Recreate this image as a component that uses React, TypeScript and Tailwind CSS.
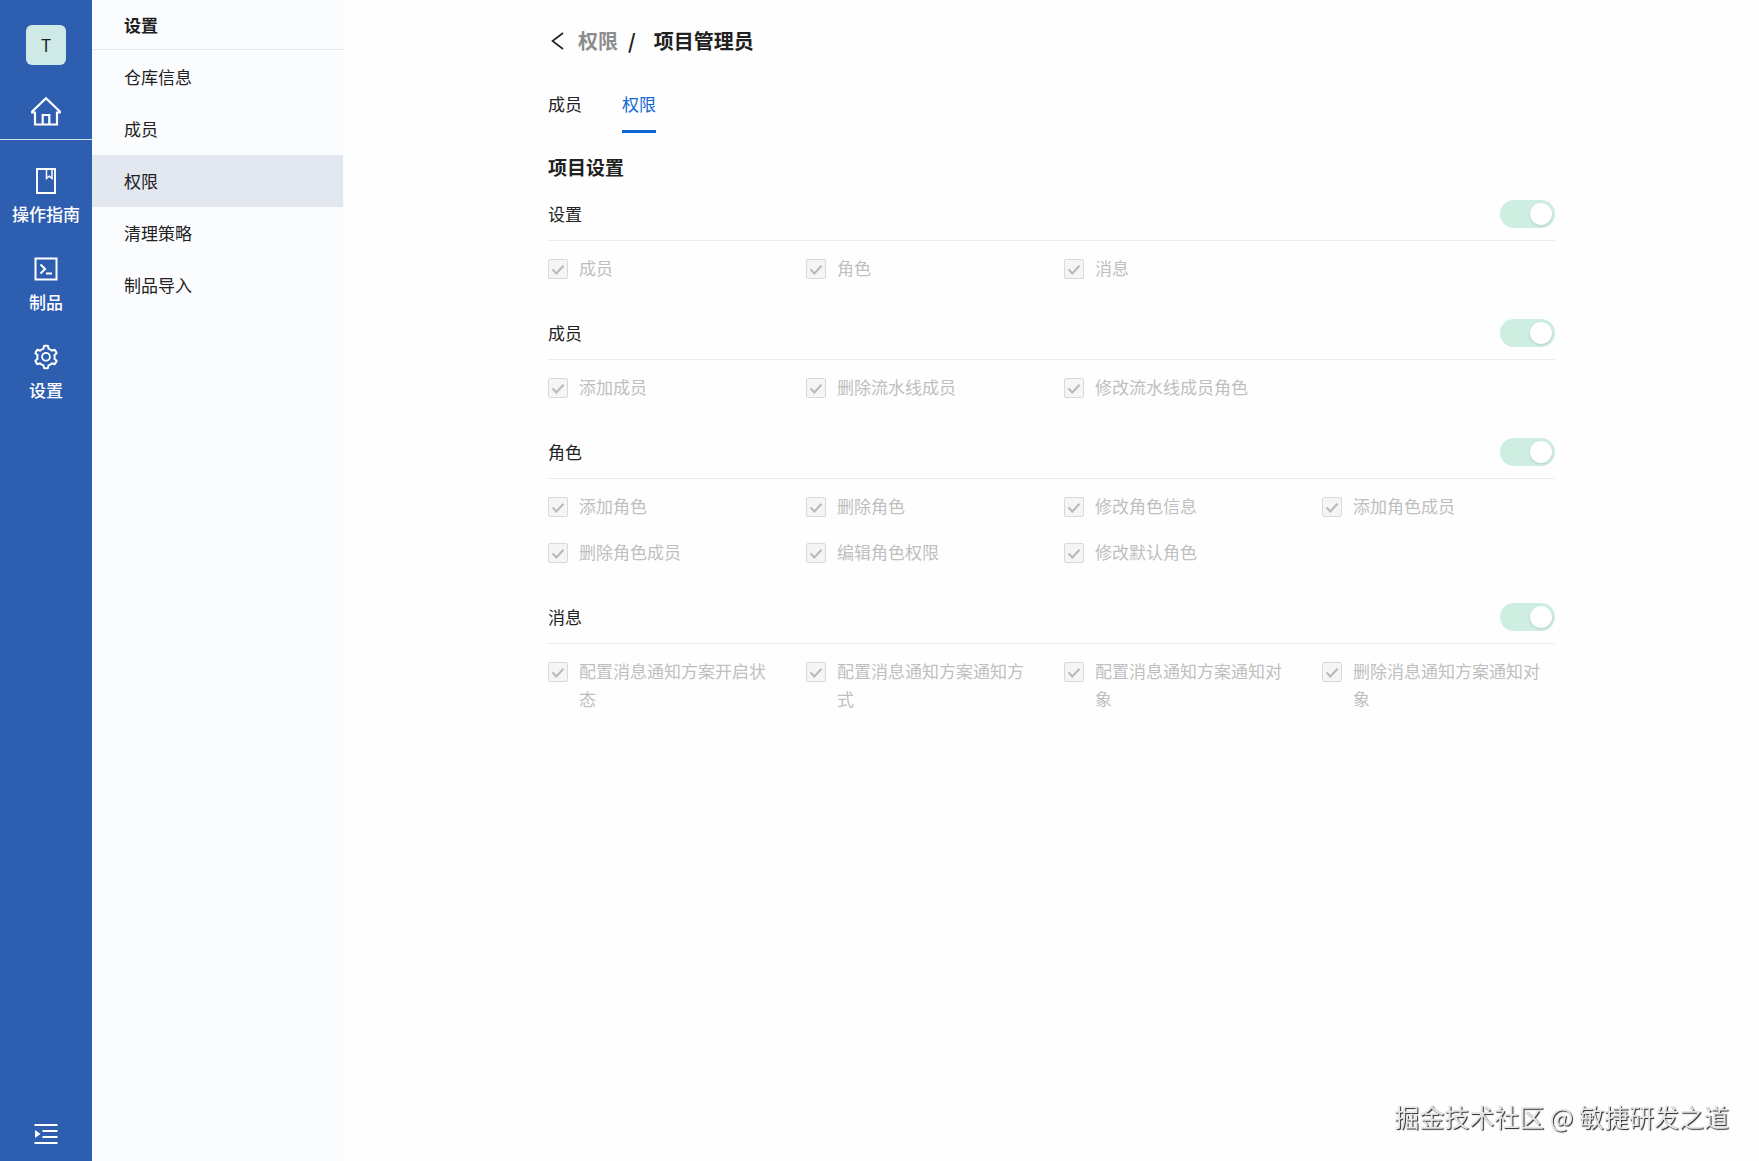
import type { ReactNode } from 'react'
import { AiOutlineSetting } from 'react-icons/ai'

const navItems: { label: string; icon: ReactNode }[] = [
  {
    label: '操作指南',
    icon: (
      <svg width="24" height="26" viewBox="0 0 24 26" fill="none" stroke="currentColor" strokeWidth="2">
        <rect x="3" y="1" width="18" height="24" />
        <path d="M12.5 1.5v9l2.7-2.3 2.8 2.3v-9" strokeWidth="1.5" />
      </svg>
    ),
  },
  {
    label: '制品',
    icon: (
      <svg width="24" height="24" viewBox="0 0 24 24" fill="none" stroke="currentColor" strokeWidth="2">
        <rect x="1.5" y="1.5" width="21" height="21" />
        <path d="M6.5 7.5l4.6 4.5-4.6 4.5M12 16.5h6" />
      </svg>
    ),
  },
  { label: '设置', icon: <AiOutlineSetting size={28} className="shrink-0" /> },
]

const menu = ['仓库信息', '成员', '权限', '清理策略', '制品导入']

const groups = [
  { name: '设置', items: ['成员', '角色', '消息'] },
  { name: '成员', items: ['添加成员', '删除流水线成员', '修改流水线成员角色'] },
  {
    name: '角色',
    items: ['添加角色', '删除角色', '修改角色信息', '添加角色成员', '删除角色成员', '编辑角色权限', '修改默认角色'],
  },
  {
    name: '消息',
    items: ['配置消息通知方案开启状态', '配置消息通知方案通知方式', '配置消息通知方案通知对象', '删除消息通知方案通知对象'],
  },
]

function Sidebar() {
  return (
    <nav className="flex w-[92px] shrink-0 flex-col bg-[#2e5eb0] text-white">
      <div className="flex flex-col items-center border-b border-[#d5dff0] pt-[25px] pb-3">
        <button className="h-10 w-10 rounded-md bg-[#cfeae6] text-[17px] text-[#1f1f1f]">T</button>
        <a href="#home" aria-label="首页" className="mt-[30px]">
          <svg width="32" height="32" viewBox="0 0 32 32" fill="none" stroke="currentColor" strokeWidth="2.2">
            <path d="M5 17.500H2.200v-1L16 3.200l13.800 13.300v1H27V29.500H5z" />
            <path d="M12.700 29.500v-9.500h6.600v9.500" />
          </svg>
        </a>
      </div>
      <div className="mt-[29px] flex flex-col gap-[30px]">
        {navItems.map((item) => (
          <a key={item.label} href="#nav" className="flex flex-col items-center gap-2 text-[17px] leading-[26px] font-medium">
            <span className="flex h-6 items-center">{item.icon}</span>
            {item.label}
          </a>
        ))}
      </div>
      <button aria-label="展开菜单" className="mx-auto mt-auto mb-[15px]">
        <svg width="24" height="24" viewBox="0 0 24 24" fill="none" stroke="currentColor" strokeWidth="2">
          <path d="M0.500 3h23M8.500 9h15M8.500 15h15M0.500 21h23" />
          <path d="M1 8v8l5.500-4z" fill="currentColor" stroke="none" />
        </svg>
      </button>
    </nav>
  )
}

function SettingsMenu() {
  return (
    <aside className="w-[252px] shrink-0 border-r border-[#fafbfc] bg-[#fbfcfe]">
      <h2 className="border-b border-[#e4e6ea] pl-8 text-[17px] leading-[49px] font-bold">设置</h2>
      <ul className="pt-px">
        {menu.map((label) => (
          <li key={label}>
            <a
              href="#menu"
              className={`block pl-8 text-[17px] leading-[52px] ${label === '权限' ? 'bg-[#e3e8f0]' : ''}`}
            >
              {label}
            </a>
          </li>
        ))}
      </ul>
    </aside>
  )
}

function PermissionCheckbox({ label }: { label: string }) {
  return (
    <label className="flex items-start gap-[11px] text-[17px] leading-7 text-[#bfbfbf]">
      <span className="mt-[5px] grid shrink-0">
        <input
          type="checkbox"
          checked
          disabled
          readOnly
          className="col-start-1 row-start-1 h-5 w-5 appearance-none rounded-xs border border-[#d9d9d9] bg-[#f5f5f5]"
        />
        <svg className="col-start-1 row-start-1" width="20" height="20" viewBox="0 0 20 20" fill="none" stroke="#b8b8b8" strokeWidth="2">
          <path d="M4.500 10.300l3.800 4.200 7.200-7.700" />
        </svg>
      </span>
      {label}
    </label>
  )
}

function PermissionGroup({ name, items }: { name: string; items: string[] }) {
  return (
    <section>
      <div className="flex h-[53px] items-center justify-between border-b border-[#ebebeb]">
        <h3 className="text-[17px]">{name}</h3>
        <input
          type="checkbox"
          role="switch"
          aria-label={name}
          checked
          disabled
          readOnly
          className="flex h-7 w-[55px] appearance-none items-center justify-end rounded-full bg-[#cdeee1] px-[3px] before:h-[22px] before:w-[22px] before:rounded-full before:bg-white before:shadow-sm before:content-['']"
        />
      </div>
      <div className="grid grid-cols-4 gap-x-[25px] gap-y-[18px] pt-[13px] pb-[25px]">
        {items.map((item) => (
          <PermissionCheckbox key={item} label={item} />
        ))}
      </div>
    </section>
  )
}

export default function App() {
  return (
    <div className="flex min-h-screen bg-white font-['Noto_Sans_CJK_SC',sans-serif] text-[#212121]">
      <Sidebar />
      <SettingsMenu />
      <main className="min-w-0 flex-1 bg-[#fefefe]">
        <div className="mx-auto w-full max-w-[1007px] pt-[27px]">
          <div className="flex items-center text-[20px] leading-7 font-bold">
            <button aria-label="返回" className="mr-3">
              <svg width="18" height="18" viewBox="0 0 18 18" fill="none" stroke="currentColor" strokeWidth="1.6">
                <path d="M15 1L4.500 9 15 17" />
              </svg>
            </button>
            <a href="#permission" className="text-[#8c8c8c]">权限</a>
            <span className="mr-[14px] ml-[10px]">/</span>
            <h1 className="ml-1">项目管理员</h1>
          </div>

          <div role="tablist" className="mt-[35px] flex gap-10 text-[17px] leading-7">
            <button role="tab" aria-selected="false" className="border-b-3 border-transparent pb-3">成员</button>
            <button role="tab" aria-selected="true" className="border-b-3 border-[#1268d3] pb-3 text-[#1268d3]">权限</button>
          </div>

          <h2 className="mt-5 mb-[7px] text-[19px] leading-7 font-bold">项目设置</h2>
          {groups.map((group) => (
            <PermissionGroup key={group.name} name={group.name} items={group.items} />
          ))}
        </div>
      </main>
      <p className="fixed right-[30px] bottom-[27px] text-[25px] leading-9 text-[#e6e6e6] [text-shadow:1px_1px_1px_#222]">
        掘金技术社区 @ 敏捷研发之道
      </p>
    </div>
  )
}
